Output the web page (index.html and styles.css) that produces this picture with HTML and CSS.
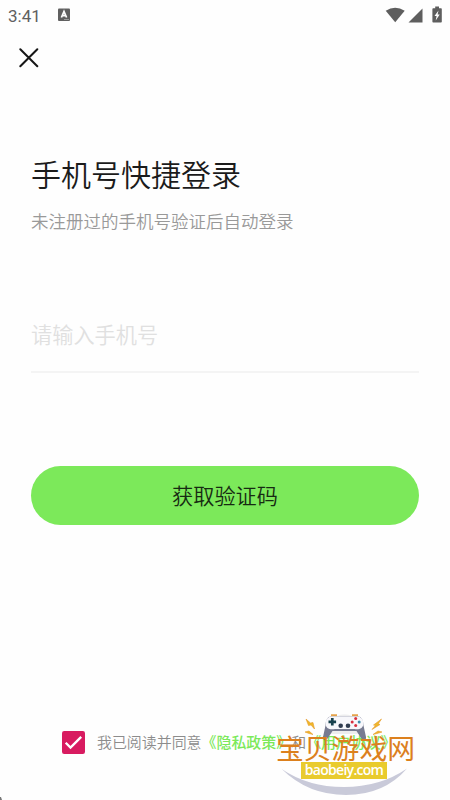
FILE: index.html
```
<!DOCTYPE html>
<html lang="zh-CN">
<head>
<meta charset="utf-8">
<title>手机号快捷登录</title>
<link rel="stylesheet" href="styles.css">
</head>
<body>
<main class="screen">
  <header class="status">
    <span class="time">3:41</span>
    <svg class="app-badge" width="12" height="14" viewBox="0 0 12 14"><rect y=".5" width="12" height="12.5" rx="1" fill="#606060"/><path d="M3.4 9.5 6 3.4l2.6 6.1M4.4 7.7h3.2" fill="none" stroke="#fff" stroke-width="1.7"/><path d="M6 11.5h5" stroke="#aaa" stroke-width=".8"/></svg>
    <svg class="signals" width="58" height="18" viewBox="0 0 58 18"><path d="M.7 4.8Q10.2-1.5 19.7 4.8L10.2 16.2Z" fill="#5e5e5e"/><path d="M37.5 2.5v14H23.5Z" fill="#5e5e5e"/><path d="M48.2 2.2h2V.6h3.8v1.6h2q.8 0 .8.8v12.7q0 .8-.8.8h-7.8q-.8 0-.8-.8V3q0-.8.8-.8Z" fill="#5e5e5e"/><path d="m53.5 4.5-4 5.5h2.1l-.9 4.5 4-6h-2.1Z" fill="#fff"/></svg>
  </header>
  <button class="close" aria-label="关闭"><svg width="20" height="20" viewBox="0 0 20 20"><path d="m1.3 1.3 17 17m0-17-17 17" stroke="#161616" stroke-width="2" stroke-linecap="round"/></svg></button>
  <section class="form">
    <h1>手机号快捷登录</h1>
    <p class="hint">未注册过的手机号验证后自动登录</p>
    <div class="field">请输入手机号</div>
    <button class="submit">获取验证码</button>
  </section>
  <footer class="agreement">
    <svg class="check" width="23" height="23" viewBox="0 0 23 23"><rect width="23" height="23" rx="2.2" fill="#d81b60"/><path d="m3.7 11.8 4.8 4.8L19.2 5.9" fill="none" stroke="#fff" stroke-width="2.3"/></svg>
    <span class="terms">我已阅读并同意<b>《隐私政策》</b>和<b>《用户协议》</b></span>
  </footer>
  <div class="watermark">
    <svg class="art" width="142" height="94" viewBox="0 0 142 94">
      <path d="M50 33a19.5 19.5 0 1 1 39 0Z" fill="#ededee"/>
      <path d="M6.700 68Q33 86 69 86T132 67.500Q109 94 71 94T6.700 68Z" fill="#c9cad9"/>
      <path d="M56 14.300h6m15 0h6" stroke="#e5a34b" stroke-width="2"/>
      <path d="M56 15.500h27c4 0 5.500 5 5.500 9L91 36c.5 4-3 3.500-5 1l-4.500-7h-24L53 37c-2 2.500-5.500 3-5 -1l2.500-11.500c0-4 1.500-9 5.500-9Z" fill="#777b91"/>
      <path d="M57 15.500h25c4 0 6.500 3 6.500 7 0 5-5 6.500-9 5.500H60c-5 1-9.500-.5-9.500-5.500 0-4 2.500-7 6.500-7Z" fill="#f7f7fb"/>
      <path d="M57.300 17v7.600m-3.800-3.800h7.600" stroke="#17414d" stroke-width="2.700"/>
      <circle cx="65.700" cy="24.700" r="2.300" fill="#303c50"/><circle cx="73" cy="24.700" r="2.300" fill="#303c50"/>
      <circle cx="80.700" cy="17.400" r="1.500" fill="#d83040"/><circle cx="80.700" cy="24.400" r="1.500" fill="#d83040"/><circle cx="77.200" cy="20.900" r="1.500" fill="#d83040"/><circle cx="84.200" cy="20.900" r="1.500" fill="#3e8cab"/>
      <path d="m31 18 2.500 6.500 2.500-.5 3.500 4-1.500-6.500-2.500.5ZM30 31l4-1 4 3.500-4-1ZM106.500 18l-8 6 2 .5-3.500 4 8-5-1.700-.7ZM107 31l-4-1-5 3.500 4-1Z" fill="#efb729" stroke="#e69a2c" stroke-width=".6"/>
    </svg>
    <strong>宝贝游戏网</strong>
    <span class="domain">baobeiy.com</span>
  </div>
  <i class="corner"></i>
</main>
</body>
</html>
```
FILE: styles.css
```
* { box-sizing: border-box; }
body { margin: 0; background: #fefefe; font-family: "Noto Sans CJK SC", sans-serif; }
button { border: 0; padding: 0; background: none; font: inherit; }
svg { display: block; }
.screen { position: relative; display: flex; flex-direction: column; width: 450px; height: 800px; overflow: hidden; }
.status { display: flex; align-items: center; height: 30px; padding: 0 7px 0 8px; }
.time { width: 50px; color: #606060; font: 17px/30px Roboto, sans-serif; padding-top: 2px; }
.signals { margin-left: auto; }
.close { width: 20px; height: 20px; margin: 18px 0 0 19px; }
.form { display: flex; flex-direction: column; padding: 83px 31px 0; }
h1 { margin: 0; font-size: 30px; line-height: 44px; font-weight: 350; color: #1b1b1b; }
.hint { margin: 13px 0 0; font-size: 17.5px; line-height: 26px; font-weight: 350; color: #999; }
.field { height: 60px; margin-top: 79px; border-bottom: 2px solid #f4f4f4; color: #e0e0e0; font-size: 21.2px; line-height: 42px; font-weight: 350; }
.submit { height: 59px; margin-top: 93px; padding-bottom: 2px; border-radius: 30px; background: #7ce95a; color: #172b12; font-size: 21.2px; line-height: 57px; font-weight: 350; }
.agreement { display: flex; align-items: center; gap: 12px; margin: auto 0 45px 62px; height: 25px; }
.terms { padding-bottom: 2px; color: #8c8c8c; font-size: 14.95px; line-height: 24px; white-space: nowrap; font-weight: 350; }
.terms b { color: #7ce95a; font-weight: 500; }
.watermark { position: absolute; left: 275px; top: 701px; width: 142px; height: 99px; }
.art { position: absolute; left: 0; top: 0; }
.watermark strong { position: absolute; left: 1px; top: 26px; color: #dc801d; font-size: 27.8px; line-height: 40px; font-weight: 400; white-space: nowrap; }
.domain { position: absolute; left: 26px; top: 61px; width: 86px; height: 17px; background: #e9cb2d; color: #fff; font: 600 14px/15px "Open Sans", sans-serif; letter-spacing: -.7px; text-align: center; }
.corner { position: absolute; left: 0; bottom: 0; width: 2px; height: 3px; background: #777; clip-path: polygon(0 0, 50% 0, 100% 100%, 0 100%); }
```
